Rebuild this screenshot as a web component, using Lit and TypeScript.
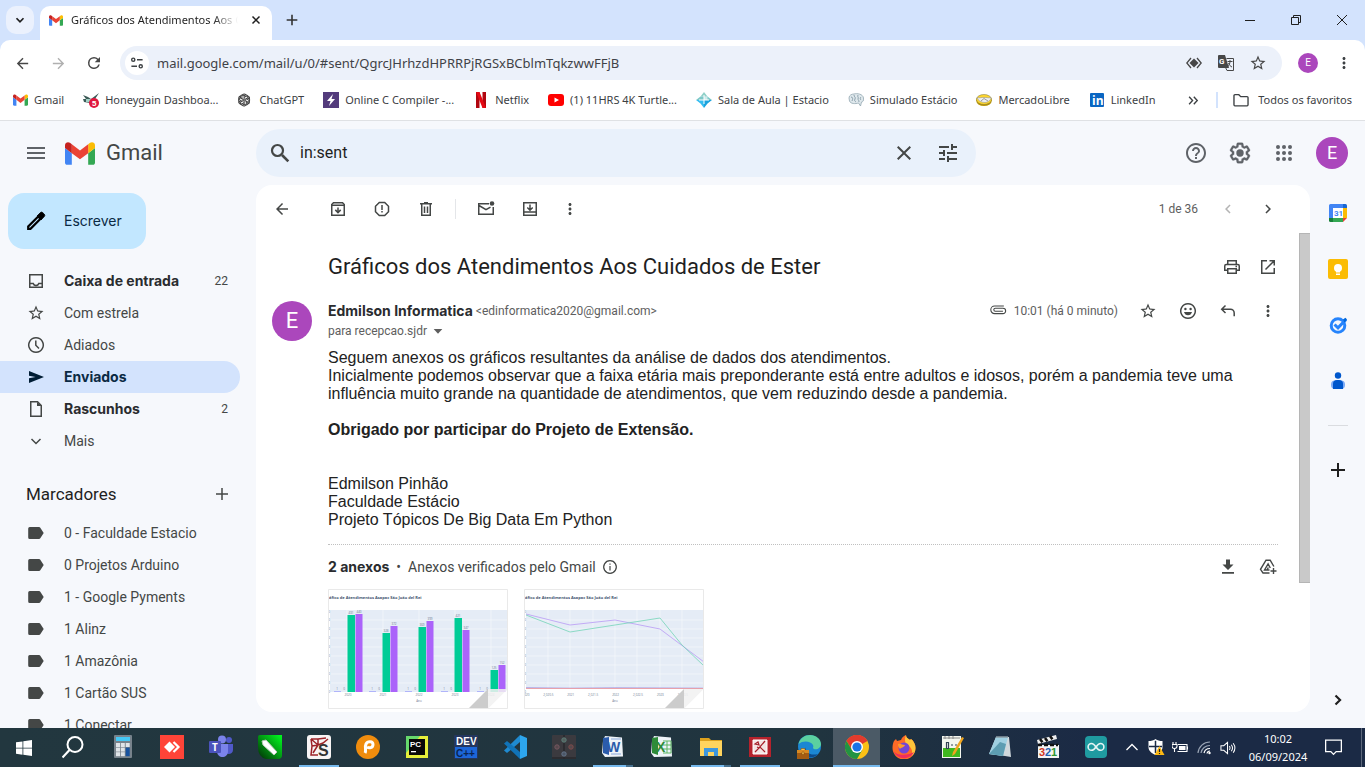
import { LitElement, html, css, svg, nothing, TemplateResult, SVGTemplateResult } from 'lit';
import { customElement, property, state } from 'lit/decorators.js';
import { classMap } from 'lit/directives/class-map.js';

const icon = (body: SVGTemplateResult, size = 20, box = '0 0 24 24') =>
  html`<svg width=${size} height=${size} viewBox=${box} fill="currentColor" aria-hidden="true">${body}</svg>`;
const p = (d: string) => svg`<path d=${d}></path>`;
const line = (d: string, w = 1.5) =>
  svg`<path d=${d} fill="none" stroke="currentColor" stroke-width=${w}></path>`;

const STAR = 'M22 9.24l-7.19-.62L12 2 9.19 8.63 2 9.24l5.46 4.73L5.82 21 12 17.27 18.18 21l-1.63-7.03L22 9.24zM12 15.4l-3.76 2.27 1-4.28-3.32-2.88 4.38-.38L12 6.1l1.71 4.04 4.38.38-3.32 2.88 1 4.28L12 15.4z';
const BACK = 'M20 11H7.83l5.59-5.59L12 4l-8 8 8 8 1.41-1.41L7.83 13H20v-2z';
const NEXT = 'M12 4l-1.41 1.41L16.17 11H4v2h12.17l-5.58 5.59L12 20l8-8z';
const CLOSE = 'M19 6.41L17.59 5 12 10.59 6.41 5 5 6.41 10.59 12 5 17.59 6.41 19 12 13.41 17.59 19 19 17.59 13.41 12z';
const MORE = 'M12 8c1.1 0 2-.9 2-2s-.9-2-2-2-2 .9-2 2 .9 2 2 2zm0 2c-1.1 0-2 .9-2 2s.9 2 2 2 2-.9 2-2-.9-2-2-2zm0 6c-1.1 0-2 .9-2 2s.9 2 2 2 2-.9 2-2-.9-2-2-2z';
const LEFT = 'M15.41 7.41L14 6l-6 6 6 6 1.41-1.41L10.83 12z';
const RIGHT = 'M8.59 16.59L10 18l6-6-6-6-1.41 1.41L13.17 12z';
const ADD = 'M19 13h-6v6h-2v-6H5v-2h6V5h2v6h6v2z';

const gmailMark = svg`
  <path d="M58 108h14V74L52 59v43c0 3.3 2.7 6 6 6" fill="#4285f4"></path>
  <path d="M120 108h14c3.3 0 6-2.7 6-6V59l-20 15" fill="#34a853"></path>
  <path d="M120 48v26l20-15v-8c0-7.400-8.500-11.600-14.400-7.200" fill="#fbbc04"></path>
  <path d="M72 74V48l24 18 24-18v26L96 92" fill="#ea4335"></path>
  <path d="M52 51v8l20 15V48l-5.600-4.200C60.500 39.400 52 43.600 52 51" fill="#c5221f"></path>`;
const gmail = (w: number, h: number) =>
  html`<svg width=${w} height=${h} viewBox="52 42 88 66" aria-hidden="true">${gmailMark}</svg>`;

const uiStyles = css`
  * { box-sizing: border-box; }
  button, input { font: inherit; color: inherit; background: none; border: 0; padding: 0; margin: 0; outline: 0; }
  button { display: inline-flex; align-items: center; justify-content: center; flex: none; cursor: pointer; }
  a { color: inherit; text-decoration: none; }
  svg { display: block; flex: none; }
  .grow { flex: 1; }
`;

/* ---------- browser window ---------- */
interface Bookmark { label: string; art: TemplateResult }

const bookmarks: Bookmark[] = [
  { label: 'Gmail', art: gmail(15, 12) },
  { label: 'Honeygain Dashboa...', art: icon(svg`
      <path d="M0 3l5 2 3 2 8-6-4 6 3 1-8 3-6-1-1-3 3 0z" fill="#3c5a57"></path><path d="M3 7h6v3H3z" fill="#9fd0c4"></path>
      <circle cx="11" cy="11" r="5" fill="#e0173e"></circle><text x="9" y="14" font-family="Liberation Sans" font-size="8" font-weight="700" fill="#fff">5</text>`, 16, '0 0 16 16') },
  { label: 'ChatGPT', art: icon(svg`<g fill="none" stroke="#444" stroke-width="1.200">
      ${[0, 60, 120, 180, 240, 300].map(a => svg`<path transform="rotate(${a} 8 8)" d="M5.500 6.500V4a2.600 2.600 0 0 1 4.400-1.900L8 3.300v4.200M10 2.200a2.800 2.800 0 0 1 2.300 3.300"></path>`)}</g>`, 16, '0 0 18 16') },
  { label: 'Online C Compiler -...', art: icon(svg`<path d="M0 0h16v16H0z" fill="#533b7c"></path><path d="M10 2L4 9h3.500L6 14l6-7H8.500z" fill="#fff"></path>`, 16, '0 0 16 16') },
  { label: 'Netflix', art: icon(svg`<path d="M3 0h3.500v16H3zM9.500 0H13v16H9.500z" fill="#b1060f"></path><path d="M3 0h3.500L13 16H9.500z" fill="#e50914"></path>`, 16, '0 0 16 16') },
  { label: '(1) 11HRS 4K Turtle...', art: icon(svg`<rect y="2" width="16" height="12" rx="3" fill="#f00"></rect><path d="M6.500 5.500L11 8l-4.500 2.500z" fill="#fff"></path>`, 16, '0 0 16 16') },
  { label: 'Sala de Aula | Estacio', art: icon(svg`<path d="M8 0l3.500 4.500h-7z" fill="#8fd0c8"></path><path d="M0 8l4.500-3.500h7L16 8z" fill="#7cc8c8"></path><path d="M8 4.500h3.500V8H8z" fill="#cfeaea"></path><path d="M0 8h8v8L4.500 11.500z" fill="#35bdf0"></path><path d="M16 8H8v8l3.500-4.500z" fill="#1aa3dd"></path><path d="M8 3v9M3 8h10" stroke="#fff" stroke-width="1"></path>`, 16, '0 0 16 16') },
  { label: 'Simulado Estácio', art: icon(svg`<path d="M1 6c0-3 3-4 5-4 3-1 9 0 9.500 4 .5 3-1 4-2 4l-1 4-2-3c-3 1-8 1-9-2z" fill="#dfe8ec" stroke="#93a7b1" stroke-width=".8"></path><path d="M3 5c2 0 2 2 1 4M6 3c0 2 2 2 1 4s0 2 1 3M10 3c-1 2 1 2 0 4 0 1 1 1 1 3M13 5c-1 1-1 2 0 3" fill="none" stroke="#849aa6" stroke-width=".9"></path>`, 16, '0 0 16 16') },
  { label: 'MercadoLibre', art: icon(svg`<ellipse cx="8" cy="8.500" rx="7.800" ry="5.500" fill="#b9960a"></ellipse><ellipse cx="8" cy="7.500" rx="7.600" ry="5" fill="#ffd72e" stroke="#77703c" stroke-width=".5"></ellipse><path d="M1 5.500c3 1 4-.5 7 0 3-.5 4 1 7 0 0 2-2 4.500-6 5-4 0-7-2-8-5z" fill="#eef0f2" stroke="#888" stroke-width=".5"></path><path d="M5 9l3-2.500 4 2.500" fill="none" stroke="#777" stroke-width=".7"></path>`, 16, '0 0 16 16') },
  { label: 'LinkedIn', art: icon(svg`<rect x="1" y="1" width="14" height="14" rx="1" fill="#0a66c2"></rect><text x="3" y="13" font-family="Open Sans" font-size="12" font-weight="700" fill="#fff">in</text>`, 16, '0 0 16 16') },
];

@customElement('browser-chrome')
export class BrowserChrome extends LitElement {
  static styles = [uiStyles, css`
    :host { display: block; flex: none; font: 11px/16px "Noto Sans", sans-serif; color: #3c4043; background: #fff; border-bottom: 1px solid #dfe1e4; }
    .strip { display: flex; align-items: flex-start; height: 40px; padding: 6px 0 0 6px; background: #d3e3fd; color: #1f1f1f; }
    .list { width: 28px; height: 28px; border-radius: 10px; background: #ebf1fd; margin-right: 6px; }
    .tab { display: flex; align-items: center; width: 232px; height: 34px; padding: 0 10px 6px 9px; border-radius: 10px 10px 0 0; background: #fff; }
    .tab-title { flex: 1; overflow: hidden; white-space: nowrap; margin: 0 12px 0 8px; mask-image: linear-gradient(90deg, #000 85%, transparent); }
    .new { width: 28px; height: 28px; margin-left: 6px; color: #333; }
    .win { width: 46px; height: 28px; }
    .bar { display: flex; align-items: center; height: 46px; padding: 0 12px 0 4px; border-radius: 10px 10px 0 0; background: #fff; }
    .corner { background: #d3e3fd; }
    .nav { width: 36px; height: 34px; color: #474747; }
    .nav.off { color: #b0b0b0; }
    .address { display: flex; align-items: center; flex: 1; height: 34px; margin-left: 8px; padding: 0 8px 0 5px; border-radius: 17px; background: #ecf1fa; }
    .site { width: 24px; height: 24px; border-radius: 12px; background: #fff; margin-right: 8px; }
    .url { flex: 1; height: 24px; font-size: 13px; color: #3f4247; }
    .tool { width: 32px; height: 32px; color: #474747; }
    .me { width: 20px; height: 20px; border-radius: 10px; background: #ab47bc; color: #fff; font: 10px/20px Roboto, sans-serif; margin: 0 17px 0 16px; }
    .marks { display: flex; align-items: center; height: 34px; padding: 0 13px 6px; white-space: nowrap; }
    .list-marks { display: flex; flex: 1; min-width: 0; overflow: hidden; gap: 19px; }
    .more-marks { display: flex; align-items: center; flex: none; gap: 15px; }
    .mark { display: flex; align-items: center; flex: none; gap: 6px; }
    .mark.all { gap: 9px; }
    .rule { width: 2px; height: 16px; background: #d3e3fd; }
  `];

  render() {
    return html`
      <div class="strip">
        <button class="list" aria-label="Pesquisar guias">${icon(line('M6 9l6 6 6-6', 3), 14)}</button>
        <div class="tab">${gmail(14, 11)}<span class="tab-title">Gráficos dos Atendimentos Aos Cuidados</span>
          <button aria-label="Fechar guia">${icon(line('M5 5l14 14M19 5L5 19', 3), 12)}</button></div>
        <button class="new" aria-label="Nova guia">${icon(line('M12 4v16M4 12h16', 2.4), 16)}</button>
        <span class="grow"></span>
        <button class="win" aria-label="Minimizar">${icon(line('M0 5.500h10', 1), 10, '0 0 10 10')}</button>
        <button class="win" aria-label="Restaurar">${icon(line('M.5 2.500h7v7h-7zM2.500 2.500v-2h7v7h-2', 1), 10, '0 0 10 10')}</button>
        <button class="win" aria-label="Fechar">${icon(line('M0 0l10 10M10 0L0 10', 1), 10, '0 0 10 10')}</button>
      </div>
      <div class="corner"><div class="bar">
        <button class="nav" aria-label="Voltar">${icon(p(BACK), 17)}</button>
        <button class="nav off" aria-label="Avançar">${icon(p(NEXT), 17)}</button>
        <button class="nav" aria-label="Recarregar">${icon(p('M17.650 6.350A7.960 7.960 0 0 0 12 4a8 8 0 1 0 7.730 10h-2.080A6 6 0 1 1 12 6c1.660 0 3.140.690 4.220 1.780L13 11h7V4l-2.350 2.350z'), 18)}</button>
        <div class="address">
          <button class="site" aria-label="Informações do site">${icon(svg`${line('M7 4h6M1 11h6', 1.6)}<circle cx="3" cy="4" r="1.700" fill="none" stroke="currentColor" stroke-width="1.500"></circle><circle cx="11" cy="11" r="1.700" fill="none" stroke="currentColor" stroke-width="1.500"></circle>`, 14, '0 0 14 15')}</button>
          <input class="url" aria-label="Endereço" .value=${'mail.google.com/mail/u/0/#sent/QgrcJHrhzdHPRRPjRGSxBCblmTqkzwwFFjB'}>
          <button class="tool" aria-label="Instalar">${icon(svg`<path d="M8 3.500l4.500 4.500L8 12.500 3.500 8z"></path>${line('M5 3L.8 8 5 13M11 3l4.200 5L11 13', 1.3)}`, 16, '0 0 16 16')}</button>
          <button class="tool" aria-label="Traduzir">${icon(svg`<path d="M0 1a1 1 0 0 1 1-1h6l4 13H1a1 1 0 0 1-1-1z"></path><path d="M8.500 3.500h7v12H9l-1.500-3" fill="none" stroke="currentColor" stroke-width="1"></path><path d="M9.500 6.500h5M12 5v1.500c0 2-1 4-2.500 5.500M10.500 8c.5 1.500 2 3.500 3.500 4" fill="none" stroke="currentColor"></path><text x="1" y="9" font-family="Roboto" font-size="8" font-weight="700" fill="#fff">G</text>`, 16, '0 0 16 16')}</button>
          <button class="tool" aria-label="Favoritar">${icon(p(STAR), 18)}</button>
        </div>
        <button class="me" aria-label="Perfil">E</button>
        <button aria-label="Menu">${icon(p(MORE), 18)}</button>
      </div></div>
      <nav class="marks">
        <div class="list-marks">${bookmarks.map(b => html`<a class="mark" href="#">${b.art}<span>${b.label}</span></a>`)}</div>
        <div class="more-marks">
          <button aria-label="Mais favoritos">${icon(line('M5 6l5.500 6L5 18M12.500 6l5.500 6-5.500 6', 2.2), 15)}</button>
          <span class="rule"></span>
          <a class="mark all" href="#">${icon(line('M1 3.500a1 1 0 0 1 1-1h4l2 2h6.500a1 1 0 0 1 1 1v7.500a1 1 0 0 1-1 1H2a1 1 0 0 1-1-1z', 1.4), 16, '0 0 16.500 16')}<span>Todos os favoritos</span></a>
        </div>
      </nav>`;
  }
}

/* ---------- mail sidebar ---------- */
interface Folder { name: string; art: SVGTemplateResult; box?: string; size?: number; count?: number; bold?: boolean }

const folders: Folder[] = [
  { name: 'Caixa de entrada', art: line('M3.750 3.750h12.500v12.500H3.750zM3.800 12.500h3.400c.4 1.300 1.500 2 2.800 2s2.400-.7 2.800-2h3.400'), box: '0 0 20 20', count: 22, bold: true },
  { name: 'Com estrela', art: p(STAR), size: 18 },
  { name: 'Adiados', art: line('M10 2.750a7.250 7.250 0 1 0 .01 0zM9.800 5.500v4.800l3.200 3.200'), box: '0 0 20 20' },
  { name: 'Enviados', art: p('M3 4l15 6-15 6v-4.700L9.500 10 3 8.700z'), box: '0 0 20 20', bold: true },
  { name: 'Rascunhos', art: svg`${line('M4.750 2.750h6.800l3.700 3.700v10.800H4.750z')}<path d="M11 3v4h4.500z"></path>`, box: '0 0 20 20', count: 2, bold: true },
  { name: 'Mais', art: line('M5.500 8l4.500 4.500L14.500 8'), box: '0 0 20 20' },
];
const labels = ['0 - Faculdade Estacio', '0 Projetos Arduino', '1 - Google Pyments', '1 Alinz', '1 Amazônia', '1 Cartão SUS', '1 Conectar'];

@customElement('mail-sidebar')
export class MailSidebar extends LitElement {
  @state() private active = 'Enviados';

  static styles = [uiStyles, css`
    :host { display: flex; flex-direction: column; flex: none; width: 256px; min-height: 0; overflow: hidden; font: 14px/20px Roboto, sans-serif; color: #444746; }
    .compose { align-self: flex-start; height: 56px; margin: 8px 0 16px 8px; padding: 0 24px 0 16px; gap: 16px; border-radius: 16px; background: #c2e7ff; color: #0b2a44; font-family: Inter, sans-serif; }
    .compose svg { color: #000; }
    .item { display: flex; align-items: center; flex: none; width: 240px; height: 32px; padding: 0 12px 0 26px; border-radius: 0 16px 16px 0; }
    .item svg { width: 20px; margin-right: 18px; }
    .name { flex: 1; white-space: nowrap; }
    .bold .name { font-family: Inter, sans-serif; font-weight: 700; color: #2a2c2f; }
    .active { background: #d3e3fd; color: #001d35; }
    .count { font-size: 12px; }
    .active.bold .name { color: #0b2a44; }
    .head { display: flex; align-items: center; justify-content: space-between; flex: none; width: 240px; height: 30px; margin: 22px 0 8px; padding: 0 8px 0 26px; color: #1f1f1f; }
    .head h3 { font-size: 17px; font-weight: 400; margin: 0; }
    .head button { color: #444746; }
  `];

  render() {
    return html`
      <button class="compose">${icon(svg`<path d="M4.200 17.500v2.300h2.300L16.500 9.800l-2.300-2.300z" fill="none" stroke="currentColor" stroke-width="2.200"></path><path d="M20.300 7.500a1.700 1.700 0 0 0 0-2.300l-1.600-1.600a1.700 1.700 0 0 0-2.300 0L13 7l4 4z" stroke="currentColor" stroke-width=".8"></path>`, 24)}<span>Escrever</span></button>
      ${folders.map(f => html`<a href="#" class=${classMap({ item: true, bold: !!f.bold, active: f.name === this.active })}
        @click=${(e: Event) => { e.preventDefault(); this.active = f.name; }}>
        ${icon(f.art, f.size ?? 20, f.box)}<span class="name">${f.name}</span>${f.count ? html`<span class="count">${f.count}</span>` : nothing}</a>`)}
      <div class="head"><h3>Marcadores</h3><button aria-label="Criar novo marcador">${icon(line('M10 4v12M4 10h12', 1.5), 20, '0 0 20 20')}</button></div>
      ${labels.map(l => html`<a href="#" class="item">${icon(p('M2.200 5.500A1.500 1.500 0 0 1 3.700 4h9.300c.6 0 1 .3 1.300.7L17.700 10l-3.400 5.300c-.3.400-.7.700-1.300.7H3.700a1.500 1.500 0 0 1-1.500-1.500z'), 20, '0 0 20 20')}<span class="name">${l}</span></a>`)}`;
  }
}

/* ---------- attachment previews ---------- */
const bars = [[20, 26, 25], [55, 44, 37], [91, 38, 32], [127, 29, 41], [163, 81, 76]];
const barValues = [['431', '440'], ['328', '372'], ['369', '399'], ['421', '347'], ['125', '152']];
const years = ['2020', '2021', '2022', '2023', '2024'];

@customElement('chart-thumb')
export class ChartThumb extends LitElement {
  @property() kind: 'bar' | 'line' = 'bar';

  static styles = css`
    :host { display: block; width: 180px; height: 120px; }
    svg { display: block; }
    text { font-family: "Open Sans", sans-serif; font-size: 3px; fill: #6b7a92; text-anchor: middle; }
    .title { font-size: 4px; font-weight: 700; text-anchor: start; fill: #44546f; }
  `;

  private barChart() {
    return svg`
      ${bars.map(([x, g, v], i) => svg`
        <path d="M${x - 0.5} ${g}h7.500V103h-7.500z" fill="#00cc96"></path><path d="M${x + 7.5} ${v}h7V103h-7z" fill="#ab63fa"></path>
        <path d="M${x - 14} 102h7v1h-7z" fill="#b0b4fa"></path>
        <text x=${x + 3} y=${g - 1}>${barValues[i][0]}</text><text x=${x + 11} y=${v - 1}>${barValues[i][1]}</text>
        <text x=${x - 11} y="101">1</text><text x=${x - 4} y="101">0</text>
        <text x=${x} y="107">${years[i]}</text>`)}`;
  }

  private lineChart() {
    return svg`
      <g fill="none">
        <path d="M2 25L46 36L91 31L136 40L180 73" stroke="#b99af5" stroke-width=".8"></path>
        <path d="M2 26L46 43L91 36L136 29L158 56L180 77" stroke="#74d4b8" stroke-width=".8"></path>
        <path d="M2 98.500l45 .6 45-.5 88 .5" stroke="#9a8fe0" stroke-width=".6"></path>
        <path d="M2 99.500H180" stroke="#e99ba3" stroke-width=".9"></path>
      </g>
      ${['2020', '2,020.5', '2021', '2,021.5', '2022', '2,022.5', '2023', '2,023.5'].map((t, i) => svg`<text x=${2 + i * 22.4} y="107">${t}</text>`)}`;
  }

  render() {
    const bar = this.kind === 'bar';
    const xs = bar ? [19, 55, 91, 127, 163] : [24, 46, 69, 91, 113, 136, 158];
    return html`<svg width="180" height="120" viewBox="0 0 180 120" role="img" aria-label="Gráfico de Atendimentos">
      <path d="M0 0h180v120H0z" fill="#fff"></path>
      <path d=${bar ? 'M2 21h178v82H2z' : 'M2 21h178v79H2z'} fill="#e5ecf6"></path>
      <g stroke="#f4f7fb" stroke-width=".8">${[31, 40, 49, 58, 67, 76, 85, 94].map(y => svg`<path d="M2 ${y}H180"></path>`)}${xs.map(x => svg`<path d="M${x} 21V${bar ? 103 : 100}"></path>`)}</g>
      <text class="title" x="1" y="10">áfico de Atendimentos Asapac São João del Rei</text>
      ${[23, 31, 40, 49, 58, 67, 76, 85, 94, 103].map(y => svg`<text x="1" y=${y + 1}>0</text>`)}
      ${bar ? this.barChart() : this.lineChart()}
      <text x="91" y="113">Ano</text>
      <path d="M140 120l20-20v20z" fill="#ccc"></path><path d="M160 120v-20h20z" fill="#f1f1f1" opacity=".85"></path><path d="M180 100v20h-20z" fill="#fff"></path>
      <path d="M.5.5h179v119H.5z" fill="none" stroke="#e9e9e9"></path>
    </svg>`;
  }
}

/* ---------- opened message ---------- */
@customElement('mail-message')
export class MailMessage extends LitElement {
  static styles = [uiStyles, css`
    :host { display: flex; flex-direction: column; flex: 1; min-width: 0; min-height: 0; overflow: hidden; border-radius: 16px; background: #fff; font: 14px/20px Roboto, sans-serif; color: #444746; }
    .tools { display: flex; align-items: center; flex: none; height: 48px; padding: 0 32px 0 16px; }
    .tools button { width: 20px; margin-right: 24px; }
    .tools .first { margin: 0 36px 0 0; }
    .tools .near { margin-right: 20px; }
    .split { width: 1px; height: 20px; margin: 0 20px 0 -5px; background: #e4e6e9; }
    .count { font-size: 12px; color: #5e5e5e; margin-right: 20px; }
    .tools .page { margin: 0 0 0 20px; }
    .tools .page.off { color: #b4b4b4; margin-left: 0; }
    .scroll { display: flex; flex: 1; min-height: 0; }
    .thread { flex: 1; min-width: 0; overflow: hidden; padding: 0 21px 0 72px; }
    .bar { flex: none; width: 11px; }
    .thumb { height: 350px; background: #c9c9c9; border: 1px solid #b5b5b5; border-right: 0; }
    .subject { display: flex; align-items: center; height: 68px; gap: 16px; }
    .subject h2 { flex: 1; margin: 0; font: 22px/28px Roboto, sans-serif; color: #1f1f1f; }
    .from { display: flex; height: 48px; }
    .avatar { flex: none; width: 40px; height: 40px; margin-left: -56px; margin-right: 16px; border-radius: 20px; background: #ab47bc; color: #fff; font-size: 22px; line-height: 40px; text-align: center; }
    .who { flex: 1; min-width: 0; }
    .who div { display: flex; align-items: center; font-size: 12px; color: #5e5e5e; white-space: nowrap; gap: 3px; height: 20px; }
    .who b { font: 700 14px/20px Inter, sans-serif; color: #2a2c2f; }
    .meta { display: flex; align-items: center; height: 20px; }
    .meta time { font-size: 12px; color: #5e5e5e; margin: 0 10px 0 7px; }
    .meta button { width: 20px; margin-left: 20px; }
    .meta time + button { margin-left: 10px; }
    .body { font: 16px/18px "Liberation Sans", Arial, sans-serif; color: #222; }
    .body p { margin: 0; min-height: 18px; }
    .attach { display: flex; align-items: center; height: 44px; margin-top: 15px; border-top: 1px dotted #c0c0c0; box-sizing: content-box; white-space: nowrap; }
    .attach b { font: 700 14px/20px Inter, sans-serif; color: #2a2c2f; }
    .attach i { font-style: normal; margin: 0 7px; }
    .attach span + svg { margin-left: 6px; }
    .attach button + button { margin-left: 20px; }
    .previews { display: flex; gap: 16px; }
  `];

  render() {
    const b20 = '0 0 20 20';
    return html`
      <div class="tools">
        <button class="first" aria-label="Voltar">${icon(p(BACK), 18)}</button>
        <button aria-label="Arquivar">${icon(svg`${line('M3.750 5.500v10.750h12.500V5.500l-1.700-1.750h-9.100z')}${line('M3.500 6.250h13M10 8.500v5M7.300 10.900l2.700 2.700 2.700-2.700', 1.5)}`, 20, b20)}</button>
        <button aria-label="Denunciar spam">${icon(svg`${line('M7.300 3.500h5.400l3.800 3.800v5.400l-3.800 3.800H7.300l-3.800-3.800V7.300z')}<path d="M9.250 6h1.500v5h-1.500zM9.250 12h1.500v1.600h-1.500z"></path>`, 20, b20)}</button>
        <button aria-label="Excluir">${icon(line('M4 4.750h12M8 3.750h4M5.750 5v11.250h8.500V5M8.500 7.500v6.500M11.500 7.500v6.500'), 20, b20)}</button>
        <span class="split"></span>
        <button aria-label="Marcar como não lida">${icon(svg`${line('M13 4.750H2.750v10.500h14.500V8M3 6.500l7 4.200 4.500-2.600')}<circle cx="16" cy="4.500" r="2.300"></circle>`, 20, b20)}</button>
        <button class="near" aria-label="Mover para">${icon(line('M3.750 3.750h12.500v12.500H3.750zM3.800 13h12.400M10 5.500v5.500M7.300 8.500L10 11.200l2.700-2.700'), 20, b20)}</button>
        <button aria-label="Mais">${icon(p(MORE), 18)}</button>
        <span class="grow"></span>
        <span class="count">1 de 36</span>
        <button class="page off" aria-label="Mais recente">${icon(p(LEFT), 18)}</button>
        <button class="page" aria-label="Mais antigo">${icon(p(RIGHT), 18)}</button>
      </div>
      <div class="scroll">
        <div class="thread">
          <div class="subject">
            <h2>Gráficos dos Atendimentos Aos Cuidados de Ester</h2>
            <button aria-label="Imprimir">${icon(line('M5.750 7.500V3.750h8.500V7.500M5.500 13.250H2.750V9a1.500 1.500 0 0 1 1.500-1.500h11.500a1.500 1.500 0 0 1 1.500 1.500v4.250H14.500M5.750 11.750h8.500v4.500h-8.500zM13.500 9.500h1.500'), 20, b20)}</button>
            <button aria-label="Nova janela">${icon(line('M9 3.750H3.750v12.500h12.500V11M11.500 3.750h4.750V8.500M16 4l-8.500 8.500'), 20, b20)}</button>
          </div>
          <div class="from">
            <div class="avatar">E</div>
            <div class="who">
              <div><b>Edmilson Informatica</b><span>&lt;edinformatica2020@gmail.com&gt;</span></div>
              <div><span>para recepcao.sjdr</span>${icon(p('M5.500 9l6.500 7 6.500-7z'), 16)}</div>
            </div>
            <div class="meta">
              ${icon(line('M16.500 4.500H6.200a4.200 4.200 0 0 0 0 8.400h9.300a3 3 0 0 0 0-6H7a1.600 1.600 0 0 0 0 3.300h8.500', 1.2), 18, '1 0 18 20')}
              <time>10:01 (há 0 minuto)</time>
              <button aria-label="Com estrela">${icon(p(STAR), 18)}</button>
              <button aria-label="Reagir">${icon(svg`${line('M10 2.750a7.250 7.250 0 1 0 .01 0z')}<circle cx="7.400" cy="8" r="1.200"></circle><circle cx="12.600" cy="8" r="1.200"></circle><path d="M6 11h8c-.5 2-2 3.300-4 3.300S6.500 13 6 11z"></path>`, 20, b20)}</button>
              <button aria-label="Responder">${icon(line('M7.500 4.500L3.700 8.250l3.800 3.750M4 8.250h8.500a3.700 3.700 0 0 1 3.700 3.700v3.300'), 20, b20)}</button>
              <button aria-label="Mais">${icon(p(MORE), 18)}</button>
            </div>
          </div>
          <div class="body">
            <p>Seguem anexos os gráficos resultantes da análise de dados dos atendimentos.</p>
            <p>Inicialmente podemos observar que a faixa etária mais preponderante está entre adultos e idosos, porém a pandemia teve uma influência muito grande na quantidade de atendimentos, que vem reduzindo desde a pandemia.</p>
            <p></p>
            <p><b>Obrigado por participar do Projeto de Extensão.</b></p>
            <p></p><p></p>
            <p>Edmilson Pinhão</p><p>Faculdade Estácio</p><p>Projeto Tópicos De Big Data Em Python</p>
          </div>
          <div class="attach">
            <b>2 anexos</b><i>•</i><span>Anexos verificados pelo Gmail</span>
            ${icon(svg`${line('M8 1.700a6.300 6.300 0 1 0 .01 0z', 1.2)}<path d="M7.400 7h1.200v4.500H7.400zM7.400 4.500h1.200v1.300H7.400z"></path>`, 16, '0 0 16 16')}
            <span class="grow"></span>
            <button aria-label="Baixar todos">${icon(p('M8 2.500h4v5h3.500L10 13 4.500 7.500H8zM4 15h12v1.700H4z'), 20, b20)}</button>
            <button aria-label="Adicionar ao Drive">${icon(line('M11.500 16H5L2.500 12.300 8 3.200h4.200l3.700 6.300M11.500 13H6.500l3.600-6 2.200 4M9 13l1.300-2.500M15.500 11v6M12.500 14h6', 1.4), 20, b20)}</button>
          </div>
          <div class="previews"><chart-thumb kind="bar"></chart-thumb><chart-thumb kind="line"></chart-thumb></div>
        </div>
        <div class="bar"><div class="thumb"></div></div>
      </div>`;
  }
}

/* ---------- mail application ---------- */
@customElement('mail-app')
export class MailApp extends LitElement {
  @state() private query = 'in:sent';

  static styles = [uiStyles, css`
    :host { display: flex; flex-direction: column; flex: 1; min-height: 0; background: #f6f8fc; font: 14px/20px Roboto, sans-serif; color: #444746; }
    .head { display: flex; align-items: center; flex: none; height: 64px; padding-right: 17px; }
    .brand { display: flex; align-items: center; flex: none; width: 256px; padding-left: 24px; color: #5f6368; }
    .logo { display: flex; align-items: center; gap: 11px; margin-left: 17px; font-size: 22px; line-height: 24px; color: #444746; }
    .search { display: flex; align-items: center; flex: 0 1 720px; height: 48px; padding: 0 16px 0 12px; border-radius: 24px; background: #e9f1fb; color: #444746; }
    .search input { flex: 1; min-width: 0; font-size: 16px; line-height: 24px; color: #1f1f1f; margin-left: 8px; }
    .search button + button { margin-left: 20px; }
    .acts { display: flex; align-items: center; gap: 20px; margin-left: auto; color: #5f6368; }
    .me { width: 32px; height: 32px; border-radius: 16px; background: #ab47bc; color: #fff; font-size: 18px; }
    .main { display: flex; flex: 1; min-height: 0; }
    mail-message { margin-bottom: 16px; }
    .side { display: flex; flex-direction: column; align-items: center; flex: none; width: 55px; padding: 18px 0; }
    .side button { width: 20px; height: 20px; margin-bottom: 36px; }
    .side hr { width: 20px; border: 0; border-top: 1px solid #dadce0; margin: -2px 0 34px; }
    .side .hide { margin: auto 0 0; color: #1f1f1f; }
    .side .add { color: #1f1f1f; }
  `];

  render() {
    return html`
      <header class="head">
        <div class="brand"><button aria-label="Menu principal">${icon(p('M3 18h18v-2H3v2zm0-5h18v-2H3v2zm0-7v2h18V6H3z'), 24)}</button>
          <a class="logo" href="#">${gmail(30, 23)}<span>Gmail</span></a></div>
        <form class="search" role="search" @submit=${(e: Event) => e.preventDefault()}>
          <button aria-label="Pesquisar">${icon(svg`<circle cx="9.500" cy="9.500" r="5.500" fill="none" stroke="currentColor" stroke-width="2.200"></circle><path d="M14 14l6.300 6.300" stroke="currentColor" stroke-width="2.600"></path>`, 24)}</button>
          <input aria-label="Pesquisar e-mail" .value=${this.query} @input=${(e: Event) => { this.query = (e.target as HTMLInputElement).value; }}>
          <button type="button" aria-label="Limpar pesquisa">${icon(p(CLOSE), 24)}</button>
          <button type="button" aria-label="Opções de pesquisa">${icon(p('M3 17v2h6v-2H3zM3 5v2h10V5H3zm10 16v-2h8v-2h-8v-2h-2v6h2zM7 9v2H3v2h4v2h2V9H7zm14 4v-2H11v2h10zm-6-4h2V7h4V5h-4V3h-2v6z'), 24)}</button>
        </form>
        <div class="acts">
          <button aria-label="Suporte">${icon(p('M11 18h2v-2h-2v2zm1-16C6.480 2 2 6.480 2 12s4.480 10 10 10 10-4.480 10-10S17.520 2 12 2zm0 18c-4.410 0-8-3.590-8-8s3.590-8 8-8 8 3.590 8 8-3.590 8-8 8zm0-14c-2.210 0-4 1.790-4 4h2c0-1.100.9-2 2-2s2 .9 2 2c0 2-3 1.750-3 5h2c0-2.250 3-2.500 3-5 0-2.210-1.790-4-4-4z'), 24)}</button>
          <button aria-label="Configurações">${icon(svg`<path d="M13.850 22.250h-3.700c-.74 0-1.360-.54-1.450-1.270l-.27-1.890c-.27-.14-.53-.29-.79-.46l-1.800.72c-.7.26-1.470-.03-1.810-.65L2.200 15.530c-.35-.66-.2-1.440.36-1.880l1.530-1.190c-.01-.15-.02-.3-.02-.46 0-.15.01-.31.02-.46l-1.520-1.190c-.59-.45-.74-1.260-.37-1.880l1.850-3.190c.34-.62 1.110-.9 1.790-.63l1.810.73c.26-.17.52-.32.78-.46l.27-1.910c.09-.7.71-1.250 1.440-1.250h3.700c.74 0 1.360.54 1.450 1.270l.27 1.890c.27.14.53.29.79.46l1.800-.72c.71-.26 1.480.03 1.820.65l1.840 3.180c.36.66.2 1.440-.36 1.880l-1.520 1.190c.01.15.02.3.02.46s-.01.31-.02.46l1.520 1.190c.56.45.72 1.230.37 1.860l-1.860 3.220c-.34.62-1.110.9-1.800.63l-1.800-.72c-.26.17-.52.32-.78.46l-.27 1.910c-.1.68-.72 1.220-1.460 1.220zm-3.230-2h2.760l.37-2.550.53-.22c.44-.18.88-.44 1.340-.78l.45-.34 2.380.96 1.380-2.400-2.030-1.580.07-.56c.03-.26.06-.51.06-.78s-.03-.53-.06-.78l-.07-.56 2.030-1.580-1.390-2.400-2.390.96-.45-.35c-.42-.32-.87-.58-1.330-.77l-.52-.22-.37-2.550h-2.760l-.37 2.550-.53.21c-.44.19-.88.44-1.340.79l-.45.33-2.380-.95-1.390 2.390 2.030 1.580-.07.56a7 7 0 0 0-.06.79c0 .26.02.53.06.78l.07.56-2.030 1.580 1.380 2.400 2.390-.96.45.35c.43.33.86.58 1.330.77l.53.22.38 2.550z" stroke="currentColor" stroke-width=".3"></path><circle cx="12" cy="12" r="3.700"></circle>`, 24)}</button>
          <button aria-label="Google Apps">${icon(svg`${[6, 12, 18].map(y => [6, 12, 18].map(x => svg`<circle cx=${x} cy=${y} r="2"></circle>`))}`, 24)}</button>
          <button class="me" aria-label="Conta do Google">E</button>
        </div>
      </header>
      <div class="main">
        <mail-sidebar></mail-sidebar>
        <mail-message></mail-message>
        <aside class="side">
          <button aria-label="Agenda">${icon(svg`<path d="M1 2.500A1.500 1.500 0 0 1 2.500 1H15v4H5v10H1z" fill="#4285f4"></path><path d="M15 1h2.500A1.500 1.500 0 0 1 19 2.500V5h-4z" fill="#1967d2"></path><path d="M15 5h4v10h-4z" fill="#fbbc04"></path><path d="M5 15h10v4H5z" fill="#34a853"></path><path d="M1 15h4v4H2.500A1.500 1.500 0 0 1 1 17.500z" fill="#188038"></path><path d="M15 15h4l-4 4z" fill="#ea4335"></path><path d="M5 5h10v10H5z" fill="#fff"></path><text x="6" y="13" font-family="Roboto" font-size="8" font-weight="700" fill="#4285f4">31</text>`, 20, '0 0 20 20')}</button>
          <button aria-label="Keep">${icon(svg`<rect width="20" height="20" rx="2" fill="#fbbc04"></rect><circle cx="10" cy="9" r="4" fill="#fff"></circle><path d="M8 11h4v2.500H8zM8 14.500h4V16H8z" fill="#fff"></path>`, 20, '0 0 20 20')}</button>
          <button aria-label="Tarefas">${icon(svg`<circle cx="10" cy="10.500" r="6.800" fill="none" stroke="#2684fc" stroke-width="3"></circle><path d="M6.500 9.500l3.500 3.300L18 4.500" fill="none" stroke="#2684fc" stroke-width="3"></path><path d="M15 4.500l2.500-1.800 1.500 1.800-2.500 3z" fill="#0066da"></path>`, 20, '0 0 20 20')}</button>
          <button aria-label="Contatos">${icon(svg`<circle cx="10" cy="4.500" r="3.200" fill="#0057cc"></circle><rect x="3" y="9.500" width="14" height="8.500" rx="4" fill="#7baaf7"></rect><path d="M5 13a4 4 0 0 1 4-4h2a4 4 0 0 1 4 4v5H5z" fill="#0057cc"></path>`, 20, '0 0 20 20')}</button>
          <hr>
          <button class="add" aria-label="Instalar complementos">${icon(p(ADD), 24)}</button>
          <button class="hide" aria-label="Ocultar painel lateral">${icon(line('M9 6.500l5.500 5.500L9 17.500', 2.6), 20)}</button>
        </aside>
      </div>`;
  }
}

/* ---------- taskbar ---------- */
interface Task { name: string; art: SVGTemplateResult; open?: boolean; stacked?: boolean; active?: boolean; slim?: boolean }

const office = (letter: string, color: string, extra: SVGTemplateResult) => svg`
  <path d="M4 1l17 1.500 1 19-18 .500L1 18 2 6z" fill="#eef3f8"></path><path d="M2 3l6-1v18l-6-2z" fill=${color}></path>${extra}
  <text x="6" y="17" font-family="Liberation Sans" font-size="14" font-weight="700" fill=${color}>${letter}</text>`;

const tasks: Task[] = [
  { name: 'Calculadora', art: svg`<rect x="3" y="0" width="18" height="23" rx="1" fill="#77828b"></rect><path d="M5 2h14v4H5z" fill="#45c8f5"></path>${[8, 12.6, 17.2].map(y => [5, 9.800].map(x => svg`<rect x=${x} y=${y} width="4" height="4" fill="#dfe4e8"></rect>`))}<path d="M14.700 8h4v4h-4z" fill="#dfe4e8"></path><path d="M14.700 12.600h4v8.600h-4z" fill="#17529e"></path>` },
  { name: 'AnyDesk', art: svg`<path d="M0 0h24v24H0z" fill="#ff4438"></path><path d="M9.500 6.500L15 12l-5.500 5.500L4 12z" fill="#fff"></path><path d="M13.500 7l5 5-5 5" fill="none" stroke="#fff" stroke-width="2.200"></path>` },
  { name: 'Teams', art: svg`<circle cx="20" cy="5" r="3" fill="#5059c9"></circle><circle cx="13" cy="4.500" r="4" fill="#7b83eb"></circle><path d="M16 9h8v6c0 4-5 5-7 3z" fill="#5059c9"></path><path d="M8 9h11v7c0 8-11 8-11 0z" fill="#7b83eb"></path><rect y="6" width="12" height="12" rx="1" fill="#4b53bc"></rect><text x="3" y="16" font-family="Open Sans" font-size="10" font-weight="700" fill="#fff">T</text>` },
  { name: 'CorelDRAW', art: svg`<defs><linearGradient id="cg" x1="1" y1="0" x2="0" y2="1"><stop stop-color="#00ff20"></stop><stop offset="1" stop-color="#022c05"></stop></linearGradient></defs><path d="M0 2q0-2 2-2h22v20q0 4-4 4H8q-8-2-8-12z" fill="url(#cg)"></path><path d="M4 6l4-1 11 12-3 3L5 10z" fill="#fff" stroke="#b9c9b9"></path>` },
  { name: 'Spyder', art: svg`<rect width="24" height="24" rx="3" fill="#f7f4f4"></rect><path d="M4 4h7l8-1M4 4l1 7-1 9h7M11 4v6l-6 1M11 10l-5 8M11 10l5-2 5-4M4 4l7 6" fill="none" stroke="#9d2328" stroke-width="1.500"></path><text x="11" y="21" font-family="Liberation Sans" font-size="16" font-weight="700" fill="#333">S</text>`, open: true },
  { name: 'Psiphon', art: svg`<circle cx="12" cy="12" r="12" fill="#f08c0d"></circle><path d="M9 18c1.500-3-.5-6 1-9s7-3 7 .5-4 4-6 2.500" fill="none" stroke="#fff" stroke-width="3"></path>` },
  { name: 'PyCharm', art: svg`<path d="M1 1h22v22H1z" fill="#e6ee3a"></path><path d="M1 1h14L1 18z" fill="#67d96c"></path><path d="M4 4h16v16H4z" fill="#080808"></path><text x="5" y="12" font-family="Liberation Sans" font-size="8" font-weight="700" fill="#fff">PC</text><path d="M6 16h5v1.300H6z" fill="#fff"></path>` },
  { name: 'Dev-C++', art: svg`<rect width="24" height="24" rx="1" fill="#24365e"></rect><path d="M1 12h22v11H1z" fill="#1c66d8"></path><text x="2" y="10" font-family="Liberation Sans" font-size="10" font-weight="700" fill="#fff">DEV</text><text x="2" y="22" font-family="Liberation Sans" font-size="10" font-weight="700" fill="#0b2450">C++</text>` },
  { name: 'VS Code', art: svg`<path d="M17 0v7L4 18l-3-2.500z" fill="#1f8ad0"></path><path d="M1 8.500L4 6l13 11v7z" fill="#1173b8"></path><path d="M17 0l7 3v18l-7 3z" fill="#2da6ee"></path>` },
  { name: 'Gamepad', art: svg`<rect width="24" height="24" rx="1" fill="#3b3a3f"></rect><path d="M0 23h24M12 0v24" stroke="#29282c" stroke-width="1.500"></path><circle cx="12" cy="5" r="2.200" fill="#55605f" stroke="#5a7d76"></circle><circle cx="5" cy="12" r="2.200" fill="#55484c" stroke="#755660"></circle><circle cx="19" cy="12" r="2.200" fill="#55484c" stroke="#7d4a4a"></circle><circle cx="12" cy="19" r="2.200" fill="#4c5666" stroke="#647489"></circle>` },
  { name: 'Word', art: office('W', '#2b5cab', svg`<path d="M10 4h10M10 19h10" stroke="#8aa9da"></path>`), open: true, stacked: true },
  { name: 'Excel', art: office('X', '#2e8b39', svg`<path d="M13 6h8v12h-8M13 10h8M13 14h8M17 6v12" fill="none" stroke="#5cb562"></path>`) },
  { name: 'Explorador de Arquivos', art: svg`<path d="M1 3h9l2 2h11v4H1z" fill="#dca11d"></path><path d="M1 6h22v15H1z" fill="#ffd45e"></path><path d="M5 13h14v8h-4v-4H9v4H5z" fill="#3f97dc"></path>`, open: true, stacked: true },
  { name: 'Access', art: svg`<path d="M1 2h22v20H1z" fill="#b5222c"></path><path d="M5 5h14v14H5z" fill="#f3e4e4" stroke="#fff"></path><path d="M7 9l3-2 1 3zM17 6l-6 7-2-1M7 17l5-5 5 5" fill="none" stroke="#a51f29" stroke-width="1.200"></path>`, open: true },
  { name: 'Edge', art: svg`<circle cx="12.500" cy="11.500" r="11.500" fill="#1b87d3"></circle><path d="M1.500 9C3 3 8 0 13 0c6 0 11 4 11 9 0 4-4 6-7 5-2-1 0-2-1-4-2-4-10-5-14.500-1z" fill="#5bd0a0"></path><path d="M9 12c-1 6 5 9 12 7-3 4-10 5-14 1z" fill="#0d4a8a"></path><path d="M0 15h12v9H0z" fill="#a45c12"></path><path d="M0 15h12v3H0z" fill="#d98a22"></path><path d="M4 15v-1.500h4V15M5 17h2v2.500H5z" fill="#f4c34e" stroke="#7c430b" stroke-width=".5"></path>` },
  { name: 'Chrome', art: svg`<circle cx="12" cy="12" r="12" fill="#fbc116"></circle><path d="M12 12L1.600 6A12 12 0 0 1 22.400 6z" fill="#e33b2e"></path><path d="M12 6h10.400a12 12 0 0 0-20.800 0L7 15z" fill="#e33b2e"></path><path d="M1.600 6A12 12 0 0 0 12 24l5.200-9L12 12 7 15z" fill="#229342"></path><circle cx="12" cy="12" r="6" fill="#fff"></circle><circle cx="12" cy="12" r="4.600" fill="#1a73e8"></circle>`, open: true, active: true },
  { name: 'Firefox', art: svg`<path d="M2 6l2-2 1 2 4-1c1-3 3-4 5-5 0 3 3 4 4 5l1-1c3 2 4.500 6 4.500 9A11.500 11.500 0 0 1 .5 13c0-3 .5-5 1.500-7z" fill="#ff6a26"></path><path d="M14 0c0 3 3 4 4 5l1-1c3 2 4.500 6 4.500 9 0 4-2 7-4 8 2-6-1-9-4-11s-3-6-1.500-10z" fill="#ffc53a"></path><path d="M1 15c2 6 8 9 13 8 4-1 7-3 8-6-4 3-18 5-21-2z" fill="#f02e5c"></path><circle cx="12" cy="13" r="5.500" fill="#7446d4"></circle><path d="M6 9c3-1 4 1 7 1-1 3-4 2-5 4-1-1-2-3-2-5z" fill="#ff9a2a"></path>`, slim: true },
  { name: 'Notepad++', art: svg`<path d="M2 1h19v22H2z" fill="#f3f6ef"></path><path d="M3 13h17v9H3z" fill="#3fb81f"></path><path d="M3 3h17M5 1v3M9 1v3M13 1v3" stroke="#888"></path><path d="M6.500 7.500h2v6h-2zM11 10h2M15 10h2" stroke="#345" fill="none" stroke-width="1.200"></path><path d="M22 2l2 1-9 16-3 2 1-4z" fill="#f0a51e"></path>`, slim: true },
  { name: 'Bloco de notas', art: svg`<path d="M8 2h13l2 20-6-1-16-2z" fill="#cfd8dc"></path><path d="M8 2h12l-5 19-14-2z" fill="#9fd0e2"></path><path d="M12 7l6 2-3 12-14-2z" fill="#5d9db2"></path><path d="M8 2h12" stroke="#8a9aa2" stroke-width="1.500"></path>`, slim: true },
  { name: 'Media Player Classic', art: svg`<path d="M2 10h21v13H2z" fill="#f4f4f4"></path><path d="M1 5l19-5 1 4L2 9z" fill="#eee"></path><path d="M4 4l3 4M9 3l3 4M14 1l3 4M2 10h20" stroke="#111" stroke-width="2.600" fill="none" stroke-dasharray="4 2"></path><g font-family="Liberation Sans" font-size="11" font-weight="700"><text x="3" y="21" fill="#d3381c">3</text><text x="9" y="21" fill="#1d62b0">2</text><text x="15" y="21" fill="#2d9732">1</text></g>`, slim: true },
  { name: 'Arduino', art: svg`<rect x="1" y="1" width="22" height="22" rx="4" fill="#1f9ba0"></rect><path d="M12 12c-2-3-3-3.500-4.500-3.500a3.300 3.300 0 0 0 0 6.800C9 15.300 10 15 12 12s3-3.500 4.500-3.500a3.300 3.300 0 0 1 0 6.800C15 15.300 14 15 12 12z" fill="none" stroke="#e4f4f4" stroke-width="1.600"></path>`, slim: true },
];

@customElement('task-bar')
export class TaskBar extends LitElement {
  static styles = [uiStyles, css`
    :host { display: flex; align-items: stretch; flex: none; height: 39px; color: #fff; font: 11px/18px "Noto Sans", sans-serif; background: linear-gradient(90deg, #22373f, #20343f 60%, #1b2a45 80%, #1b2a45); }
    .task { width: 49px; }
    .task.slim { width: 48px; }
    .task.find { width: 50px; }
    .task.active { width: 47px; }
    .task span { display: flex; align-items: center; justify-content: center; width: 40px; height: 39px; border-bottom: 2px solid transparent; }
    .task.open span { border-color: #76b9ed; }
    .task.active span { width: 47px; background: #4b5a66; }
    .task.stacked span { border-image: linear-gradient(90deg, #76b9ed 80%, #47708e 80%) 2; }
    .tray { display: flex; align-items: center; flex: none; margin-left: auto; }
    .tray button { width: 24px; height: 39px; }
    .clock { width: 66px; text-align: center; margin-left: 5px; }
    .tray .note { width: 44px; }
    .end { width: 4px; height: 39px; border-left: 1px solid #5c677b; margin-left: 6px; }
  `];

  render() {
    return html`
      <button class="task slim" aria-label="Iniciar">${icon(p('M0 2.300L6.500 1.400v6.300H0zM7.300 1.300L16 0v7.700H7.300zM0 8.400h6.500v6.300L0 13.800zM7.300 8.400H16V16l-8.700-1.200z'), 16, '0 0 16 16')}</button>
      <button class="task find" aria-label="Pesquisar">${icon(svg`<circle cx="14" cy="8.500" r="7.500" fill="none" stroke="currentColor" stroke-width="2"></circle><path d="M8.500 14L1.500 21.500" stroke="currentColor" stroke-width="2.200"></path>`, 23, '1 0 23 23')}</button>
      ${tasks.map(t => html`<button class=${classMap({ task: true, open: !!t.open, stacked: !!t.stacked, active: !!t.active, slim: !!t.slim })} aria-label=${t.name}><span>${icon(t.art, 24)}</span></button>`)}
      <div class="tray">
        <button aria-label="Ícones ocultos">${icon(line('M1.500 9L7 3.500 12.500 9', 1.3), 14, '0 0 14 14')}</button>
        <button aria-label="Segurança">${icon(svg`<path d="M7.500 0c2 1.500 4 2 7 2v6c0 4-3 6-7 8-4-2-7-4-7-8V2c3 0 5-.5 7-2z" fill="#fff"></path><path d="M7.500 1.800V14M1 7.500h13" stroke="#1b2a45" stroke-width="1.500"></path><path d="M11.500 7l5 9h-10z" fill="#fdb913"></path><path d="M11.500 10v3M11.500 14v1" stroke="#222" stroke-width="1.200"></path>`, 17, '0 0 17 17')}</button>
        <button aria-label="Bateria">${icon(svg`${line('M6 3.500h9v7H5.500M1 1v2M4 1v2M0 3.500h5v1.500a2 2 0 0 1-5 0zM2.500 7v4', 1.1)}<path d="M7 5h6.500v4H7zM15 5.500h1v3h-1z"></path>`, 16, '0 0 16 14')}</button>
        <button aria-label="Rede">${icon(svg`<g fill="none" stroke="#9aa5b5" stroke-width="1.200"><path d="M1 13A12 12 0 0 1 13 2"></path><path d="M4 13a9 9 0 0 1 9-7.500"></path></g><path d="M7 13a6 6 0 0 1 6-4.500M10 13.500a3 3 0 0 1 3-2.500" fill="none" stroke="#fff" stroke-width="1.200"></path><circle cx="12.500" cy="13" r="1.200"></circle>`, 15, '0 0 15 15')}</button>
        <button aria-label="Volume">${icon(line('M1 5.500h3l4-3.500v12l-4-3.500H1zM10 6c.8 1.200.8 2.800 0 4M12 4.500c1.500 2 1.500 5 0 7M14 3c2.200 3 2.200 7 0 10', 1.1), 16, '0 0 17 16')}</button>
        <time class="clock">10:02<br>06/09/2024</time>
        <button class="note" aria-label="Notificações">${icon(line('M.6 1.100h14.800v10.800H10.500L8 14.500 5.500 11.900H.6z', 1.2), 17, '0 0 16 16')}</button>
        <span class="end"></span>
      </div>`;
  }
}

@customElement('app-root')
export class AppRoot extends LitElement {
  static styles = css`
    :host { display: flex; flex-direction: column; height: 100vh; overflow: hidden; }
  `;

  render() {
    return html`<browser-chrome></browser-chrome><mail-app></mail-app><task-bar></task-bar>`;
  }
}
